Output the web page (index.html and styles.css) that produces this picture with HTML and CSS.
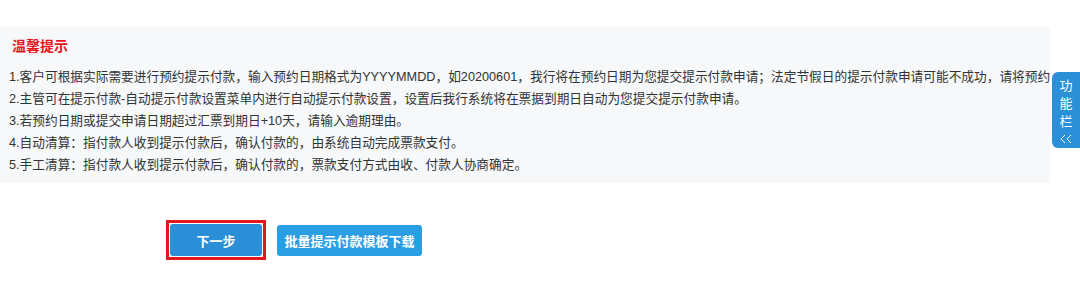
FILE: index.html
```html
<!DOCTYPE html>
<html lang="zh-CN">
<head>
  <meta charset="UTF-8">
  <meta name="viewport" content="width=device-width, initial-scale=1.0">
  <title>提示付款</title>
  <link rel="stylesheet" href="styles.css">
</head>
<body>
  <div class="tips">
    <h4 class="tips-title">温馨提示</h4>
    <p>1.客户可根据实际需要进行预约提示付款，输入预约日期格式为YYYYMMDD，如20200601，我行将在预约日期为您提交提示付款申请；法定节假日的提示付款申请可能不成功，请将预约</p>
    <p>2.主管可在提示付款-自动提示付款设置菜单内进行自动提示付款设置，设置后我行系统将在票据到期日自动为您提交提示付款申请。</p>
    <p>3.若预约日期或提交申请日期超过汇票到期日+10天，请输入逾期理由。</p>
    <p>4.自动清算：指付款人收到提示付款后，确认付款的，由系统自动完成票款支付。</p>
    <p>5.手工清算：指付款人收到提示付款后，确认付款的，票款支付方式由收、付款人协商确定。</p>
  </div>

  <div class="actions">
    <span class="focus-frame">
      <button class="btn btn-next">下一步</button>
    </span>
    <button class="btn btn-download">批量提示付款模板下载</button>
  </div>

  <div class="side-tab">
    <span>功</span>
    <span>能</span>
    <span>栏</span>
    <svg class="arrows" width="12" height="10" viewBox="0 0 12 10">
      <polyline points="5,1 1,5 5,9" fill="none" stroke="#fff" stroke-width="1"/>
      <polyline points="11,1 7,5 11,9" fill="none" stroke="#fff" stroke-width="1"/>
    </svg>
  </div>
</body>
</html>
```

FILE: styles.css
```css
body {
margin: 0;
font-family: "Liberation Sans", "Noto Sans CJK SC", sans-serif;
font-size: 12.7px;
color: #333;
background-color: #fff;
}

.tips {
margin-top: 27px;
width: 1050px;
height: 156px;
box-sizing: border-box;
padding: 11px 0 0 9px;
background-color: #f6f8fa;
overflow: hidden;
white-space: nowrap;
}

.tips-title {
margin: 0 0 12px 3px;
font-size: 14px;
line-height: 16px;
font-weight: bold;
color: #e8141c;
}

.tips p {
margin: 0;
line-height: 22px;
}

.actions {
display: flex;
align-items: center;
gap: 11px;
margin-top: 37px;
padding-left: 166px;
}

.focus-frame {
display: inline-flex;
padding: 1px;
border: 3px solid #e3151f;
background-color: #fff;
}

.btn {
border: none;
border-radius: 3px;
color: #fff;
font-family: "Liberation Sans", "Noto Sans CJK SC", sans-serif;
font-size: 13px;
font-weight: bold;
cursor: pointer;
}

.btn-next {
width: 92px;
height: 32px;
background-color: #2a8fd6;
}

.btn-download {
width: 145px;
height: 31px;
background-color: #2a9ee3;
}

.side-tab {
position: absolute;
top: 72px;
right: 0;
width: 28px;
height: 76px;
box-sizing: border-box;
padding-top: 5px;
display: flex;
flex-direction: column;
align-items: center;
background-color: #2b90d8;
border-radius: 6px 0 0 6px;
color: #fff;
font-size: 13px;
line-height: 18px;
}

.side-tab .arrows {
margin-top: 3px;
}
```
